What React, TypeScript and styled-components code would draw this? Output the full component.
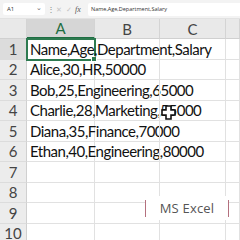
import styled, { createGlobalStyle } from "styled-components";

const GlobalStyle = createGlobalStyle`
  html, body { margin: 0; padding: 0; background: #ffffff; }
  body { width: 240px; height: 240px; overflow: hidden; }
`;

const rows = [
  "Name,Age,Department,Salary",
  "Alice,30,HR,50000",
  "Bob,25,Engineering,65000",
  "Charlie,28,Marketing,55000",
  "Diana,35,Finance,70000",
  "Ethan,40,Engineering,80000",
  "",
  "",
  "",
  "",
];

const columns = ["A", "B", "C", ""];

export default function App() {
  return (
    <>
      <GlobalStyle />
      <Sheet>
        <FormulaBar>
          <NameBox>
            <span>A1</span>
            <Chevron>⌄</Chevron>
          </NameBox>
          <Dots>⋮</Dots>
          <BarIcon>✕</BarIcon>
          <BarIcon>✓</BarIcon>
          <Fx>fx</Fx>
          <FormulaInput>Name,Age,Department,Salary</FormulaInput>
        </FormulaBar>
        <Grid>
          <Corner />
          {columns.map((c, i) => (
            <ColHeader key={i} $active={i === 0}>
              {c}
            </ColHeader>
          ))}
          {rows.map((text, r) => (
            <Row key={r}>
              <RowHeader $active={r === 0}>{r + 1}</RowHeader>
              <Cell $selected={r === 0}>
                <CellText>{text}</CellText>
                {r === 0 && <FillHandle />}
              </Cell>
              <Cell />
              <Cell />
              <Cell />
            </Row>
          ))}
        </Grid>
        <Cursor width="15" height="15" viewBox="0 0 15 15">
          <path
            d="M5 1h5v4h4v5h-4v4H5v-4H1V5h4z"
            fill="#fff"
            stroke="#111"
            strokeWidth="1.6"
          />
        </Cursor>
        <Label>
          <Bar />
          <LabelText>MS Excel</LabelText>
          <Bar />
        </Label>
      </Sheet>
    </>
  );
}

const Sheet = styled.div`
  position: relative;
  width: 240px;
  height: 240px;
  overflow: hidden;
  background: #fff;
  font-family: Lato, "Open Sans", sans-serif;
`;

const FormulaBar = styled.div`
  height: 19px;
  background: #f3f3f3;
  display: flex;
  align-items: center;
  padding: 0 0 0 3px;
  gap: 2px;
  box-sizing: border-box;
  border-bottom: 1px solid #e2e2e2;
`;

const NameBox = styled.div`
  width: 42px;
  height: 12px;
  background: #fff;
  border-radius: 2px;
  display: flex;
  align-items: center;
  justify-content: space-between;
  padding: 0 3px 0 4px;
  box-sizing: border-box;
  font-family: "Open Sans", sans-serif;
  font-size: 6px;
  color: #333;
`;

const Chevron = styled.span`
  font-size: 7px;
  line-height: 5px;
  color: #666;
  margin-top: -3px;
`;

const Dots = styled.span`
  font-size: 8px;
  color: #888;
  width: 6px;
  text-align: center;
`;

const BarIcon = styled.span`
  font-size: 7px;
  color: #c4c4c4;
  width: 8px;
  text-align: center;
`;

const Fx = styled.span`
  font-family: "Liberation Serif", serif;
  font-style: italic;
  font-size: 8px;
  color: #555;
  width: 8px;
`;

const FormulaInput = styled.div`
  flex: 1;
  height: 13px;
  margin-left: 3px;
  background: #fff;
  border-radius: 2px 0 0 2px;
  display: flex;
  align-items: center;
  padding-left: 3px;
  font-family: "Open Sans", sans-serif;
  font-size: 5.5px;
  color: #333;
  white-space: nowrap;
`;

const Grid = styled.div`
  display: grid;
  grid-template-columns: 27px 68px 65px 66px 14px;
  grid-template-rows: 20px;
  grid-auto-rows: 20.5px;
`;

const Row = styled.div`
  display: contents;
`;

const Corner = styled.div`
  background: #e9e9e9;
  border-right: 1px solid #d4d4d4;
  border-bottom: 1px solid #d0d0d0;
`;

const ColHeader = styled.div<{ $active?: boolean }>`
  background: ${(p) => (p.$active ? "#d6d6d6" : "#e9e9e9")};
  color: ${(p) => (p.$active ? "#1e6e42" : "#444")};
  border-right: 1px solid #d4d4d4;
  border-bottom: ${(p) => (p.$active ? "2px solid #1e6e42" : "1px solid #d0d0d0")};
  display: flex;
  align-items: center;
  justify-content: center;
  font-size: 15px;
  box-sizing: border-box;
`;

const RowHeader = styled.div<{ $active?: boolean }>`
  background: ${(p) => (p.$active ? "#dcdcdc" : "#ececec")};
  color: #444;
  border-right: 1px solid #d0d0d0;
  border-bottom: 1px solid #dcdcdc;
  display: flex;
  align-items: center;
  justify-content: center;
  font-size: 15px;
  box-sizing: border-box;
`;

const Cell = styled.div<{ $selected?: boolean }>`
  position: relative;
  border-right: 1px solid #e1e1e1;
  border-bottom: 1px solid #e1e1e1;
  box-sizing: border-box;
  outline: ${(p) => (p.$selected ? "2px solid #2d7a50" : "none")};
  outline-offset: -1px;
  z-index: ${(p) => (p.$selected ? 2 : 0)};
`;

const CellText = styled.span`
  position: absolute;
  left: 3px;
  top: 0;
  bottom: 0;
  display: flex;
  align-items: center;
  font-size: 15px;
  letter-spacing: -0.5px;
  color: #111;
  white-space: nowrap;
  z-index: 1;
`;

const FillHandle = styled.div`
  position: absolute;
  right: -3px;
  bottom: -3px;
  width: 4px;
  height: 4px;
  background: #2d7a50;
  border: 1px solid #fff;
`;

const Cursor = styled.svg`
  position: absolute;
  left: 161px;
  top: 105px;
  z-index: 5;
`;

const Label = styled.div`
  position: absolute;
  left: 145px;
  top: 196px;
  width: 84px;
  height: 24px;
  background: #fff;
  display: flex;
  align-items: center;
  justify-content: space-between;
  z-index: 4;
`;

const Bar = styled.div`
  width: 1px;
  height: 17px;
  background: #b4707e;
`;

const LabelText = styled.span`
  font-family: "Open Sans", sans-serif;
  font-size: 13px;
  color: #555;
  letter-spacing: 0.2px;
`;
